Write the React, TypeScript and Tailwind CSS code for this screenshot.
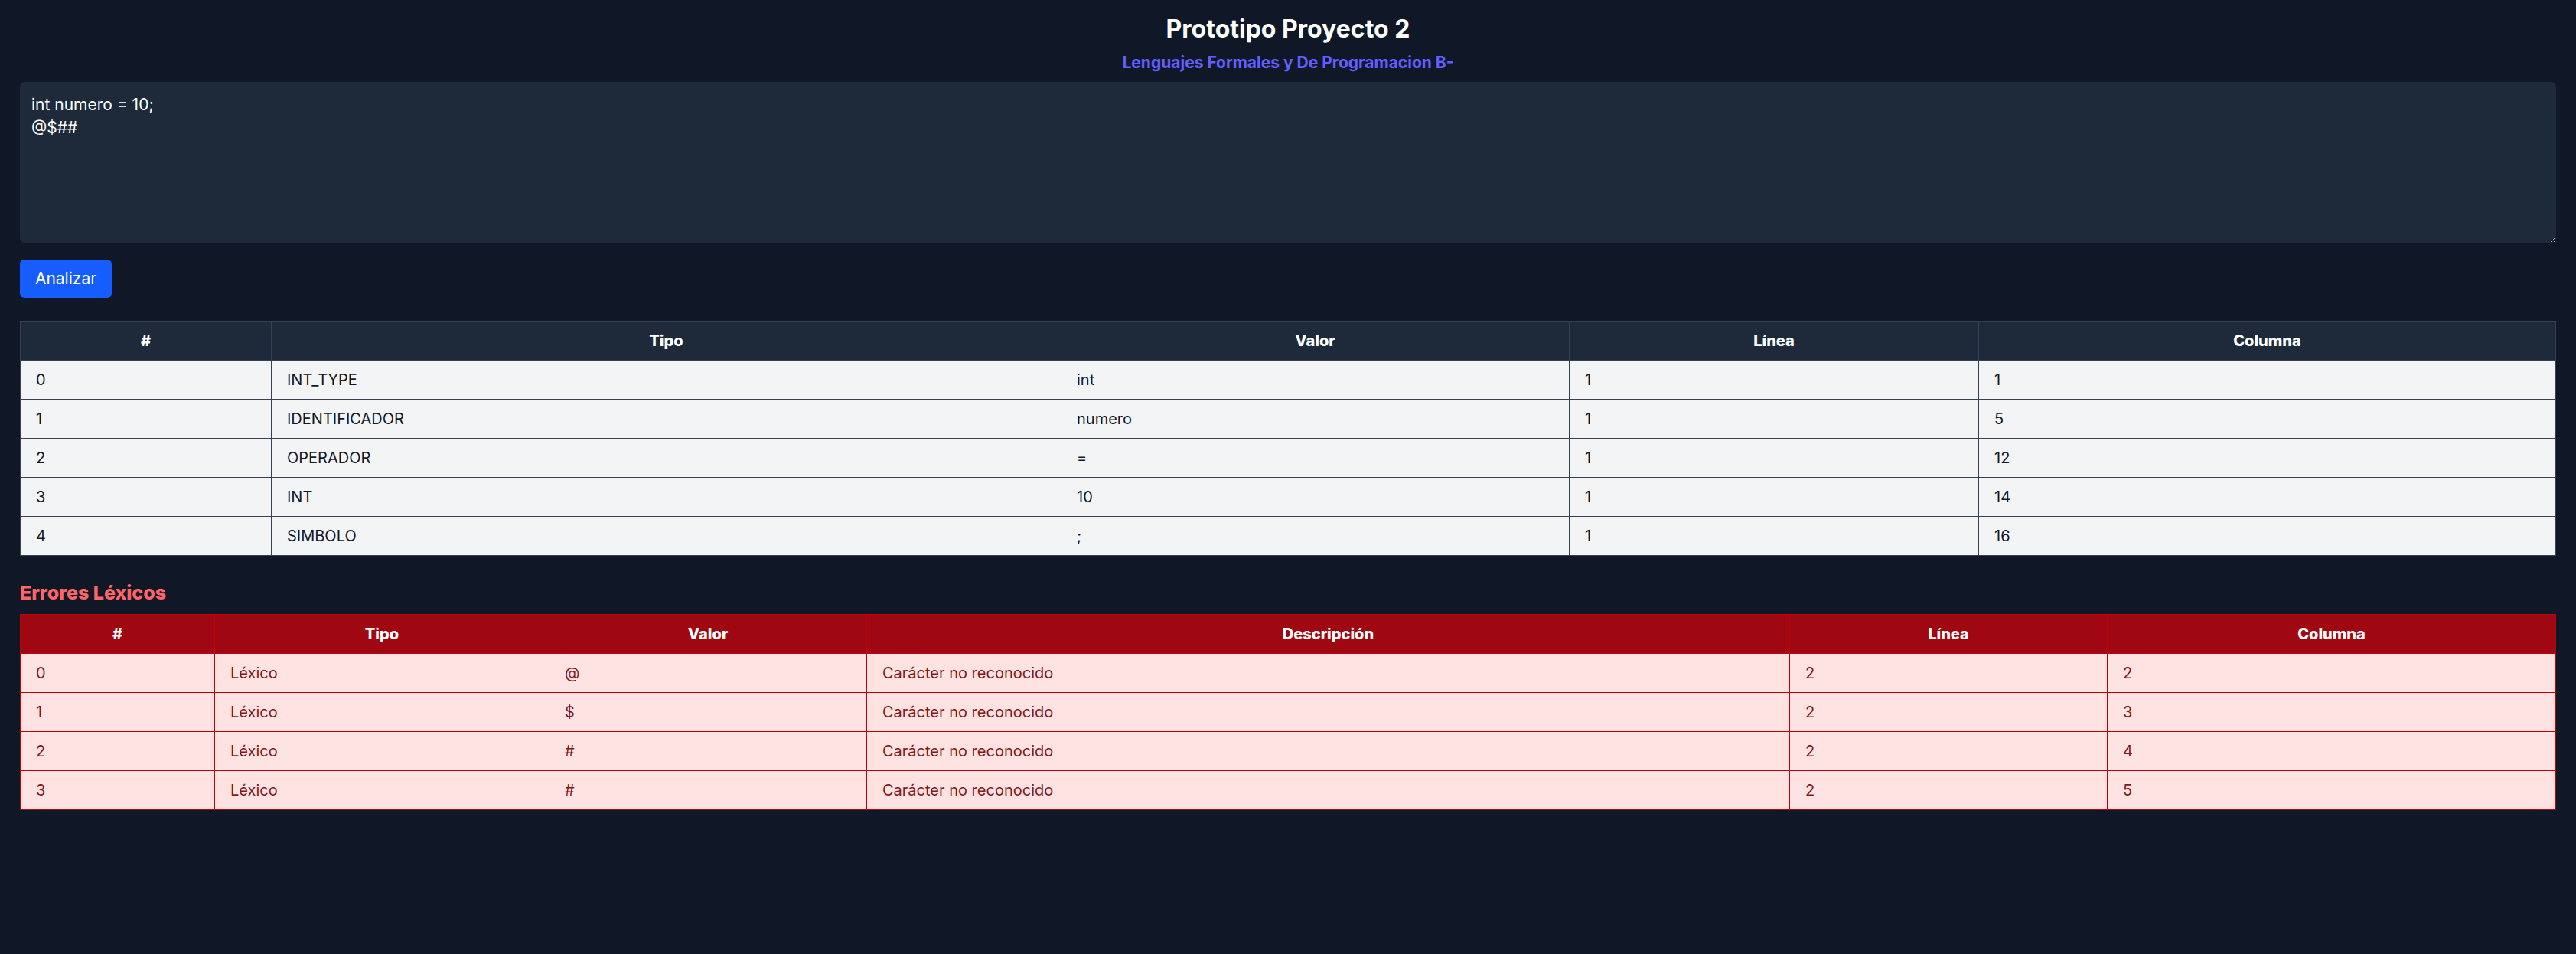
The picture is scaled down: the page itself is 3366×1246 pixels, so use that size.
import { useState } from 'react';

interface Token {
  tipo: string;
  valor: string;
  linea: number;
  columna: number;
}

interface LexError {
  tipo: string;
  valor: string;
  descripcion: string;
  linea: number;
  columna: number;
}

const tokens: Token[] = [
  { tipo: 'INT_TYPE', valor: 'int', linea: 1, columna: 1 },
  { tipo: 'IDENTIFICADOR', valor: 'numero', linea: 1, columna: 5 },
  { tipo: 'OPERADOR', valor: '=', linea: 1, columna: 12 },
  { tipo: 'INT', valor: '10', linea: 1, columna: 14 },
  { tipo: 'SIMBOLO', valor: ';', linea: 1, columna: 16 },
];

const errores: LexError[] = [
  { tipo: 'Léxico', valor: '@', descripcion: 'Carácter no reconocido', linea: 2, columna: 2 },
  { tipo: 'Léxico', valor: '$', descripcion: 'Carácter no reconocido', linea: 2, columna: 3 },
  { tipo: 'Léxico', valor: '#', descripcion: 'Carácter no reconocido', linea: 2, columna: 4 },
  { tipo: 'Léxico', valor: '#', descripcion: 'Carácter no reconocido', linea: 2, columna: 5 },
];

export default function App() {
  const [code, setCode] = useState('int numero = 10;\n@$##');

  return (
    <div className="min-h-screen bg-[#101828] px-[26px] pb-10 font-['Inter',sans-serif]">
      <h1 className="pt-[18px] text-center text-[32px] leading-[40px] font-bold text-white">Prototipo Proyecto 2</h1>
      <p className="mt-[10px] text-center text-[21px] leading-[28px] font-bold text-[#615fff]">
        Lenguajes Formales y De Programacion B-
      </p>

      {/* editor */}
      <textarea
        value={code}
        onChange={(e) => setCode(e.target.value)}
        className="mt-[11px] block h-[210px] w-full rounded-md bg-[#1e2939] p-[15px] text-[21px] leading-[30px] text-white outline-none"
      />

      <button className="mt-[22px] h-[50px] w-[120px] rounded-md bg-[#155dfc] text-[21px] text-white">Analizar</button>

      {/* tokens */}
      <table className="mt-[30px] w-full table-fixed border-collapse text-[20px]">
        <colgroup>
          <col className="w-[328px]" />
          <col className="w-[1032px]" />
          <col className="w-[664px]" />
          <col className="w-[535px]" />
          <col />
        </colgroup>
        <thead>
          <tr className="bg-[#1e2939] text-white">
            {['#', 'Tipo', 'Valor', 'Línea', 'Columna'].map((h) => (
              <th key={h} className="h-[51px] border border-[#364153] px-5 text-center font-extrabold">{h}</th>
            ))}
          </tr>
        </thead>
        <tbody>
          {tokens.map((t, i) => (
            <tr key={i} className="bg-[#f3f4f6] text-[#101828]">
              <td className="h-[51px] border border-[#364153] px-5">{i}</td>
              <td className="border border-[#364153] px-5">{t.tipo}</td>
              <td className="border border-[#364153] px-5">{t.valor}</td>
              <td className="border border-[#364153] px-5">{t.linea}</td>
              <td className="border border-[#364153] px-5">{t.columna}</td>
            </tr>
          ))}
        </tbody>
      </table>

      <h2 className="mt-[31px] text-[25px] leading-[34px] font-extrabold text-[#ff6467]">Errores Léxicos</h2>

      {/* errores */}
      <table className="mt-[11px] w-full table-fixed border-collapse text-[20px]">
        <colgroup>
          <col className="w-[254px]" />
          <col className="w-[437px]" />
          <col className="w-[415px]" />
          <col className="w-[1206px]" />
          <col className="w-[415px]" />
          <col />
        </colgroup>
        <thead>
          <tr className="bg-[#9f0712] text-white">
            {['#', 'Tipo', 'Valor', 'Descripción', 'Línea', 'Columna'].map((h) => (
              <th key={h} className="h-[51px] border border-[#c10007] px-5 text-center font-extrabold">{h}</th>
            ))}
          </tr>
        </thead>
        <tbody>
          {errores.map((e, i) => (
            <tr key={i} className="bg-[#ffe2e2] text-[#82181a]">
              <td className="h-[51px] border border-[#c10007] px-5">{i}</td>
              <td className="border border-[#c10007] px-5">{e.tipo}</td>
              <td className="border border-[#c10007] px-5">{e.valor}</td>
              <td className="border border-[#c10007] px-5">{e.descripcion}</td>
              <td className="border border-[#c10007] px-5">{e.linea}</td>
              <td className="border border-[#c10007] px-5">{e.columna}</td>
            </tr>
          ))}
        </tbody>
      </table>
    </div>
  );
}
